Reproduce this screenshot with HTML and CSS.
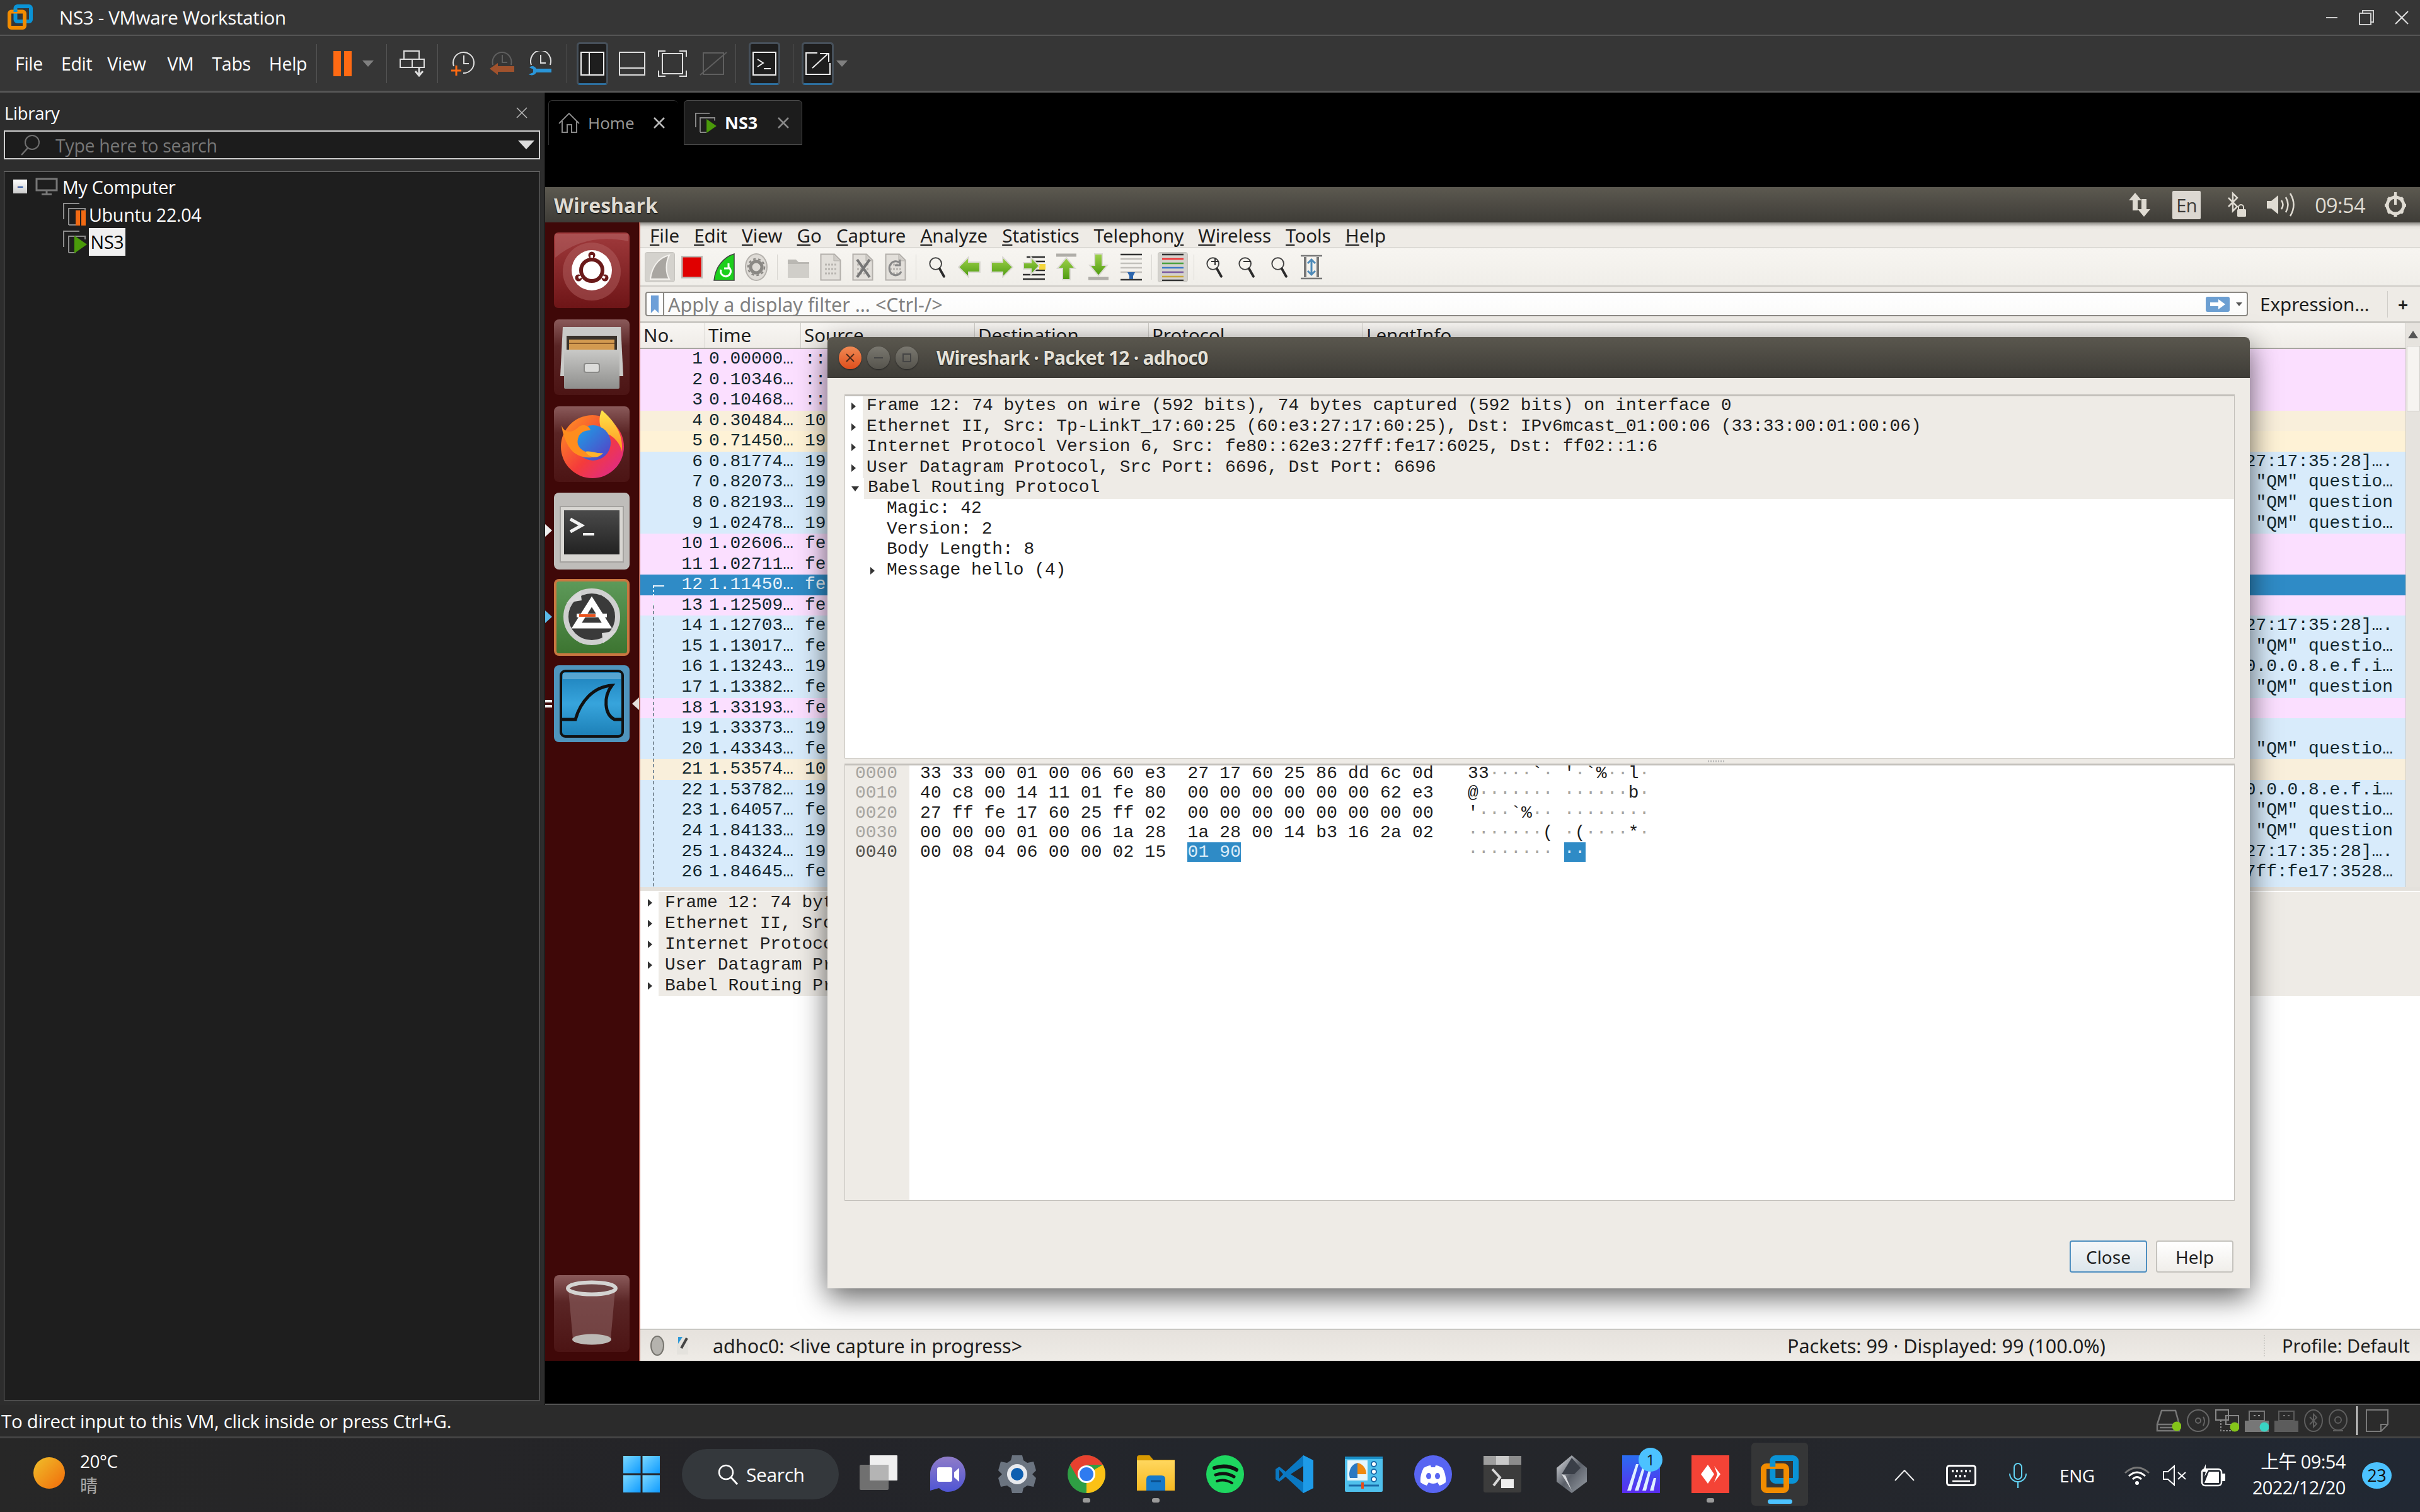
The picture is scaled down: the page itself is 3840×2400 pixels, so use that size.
FILE: index.html
```html
<!DOCTYPE html>
<html lang="en">
<head>
<meta charset="utf-8">
<title>NS3 - VMware Workstation</title>
<link rel="stylesheet" href="styles.css">
</head>
<body>
<svg class="defs" width="0" height="0">
  <defs>
    <linearGradient id="gRed" x1="0" y1="0" x2="0" y2="1"><stop offset="0" stop-color="#a03a3c"/><stop offset="1" stop-color="#6e1517"/></linearGradient>
    <linearGradient id="gMetal" x1="0" y1="0" x2="0" y2="1"><stop offset="0" stop-color="#c9c9c7"/><stop offset="1" stop-color="#8f8f8d"/></linearGradient>
    <linearGradient id="gTile" x1="0" y1="0" x2="0" y2="1"><stop offset="0" stop-color="#8a5a5a"/><stop offset=".35" stop-color="#5a2525"/><stop offset="1" stop-color="#4c1414"/></linearGradient>
    <linearGradient id="gTerm" x1="0" y1="0" x2="0" y2="1"><stop offset="0" stop-color="#4a4a4a"/><stop offset="1" stop-color="#222"/></linearGradient>
    <linearGradient id="gGreen" x1="0" y1="0" x2="0" y2="1"><stop offset="0" stop-color="#5e9a5a"/><stop offset="1" stop-color="#3c7430"/></linearGradient>
    <linearGradient id="gShark" x1="0" y1="0" x2="0" y2="1"><stop offset="0" stop-color="#1c80ba"/><stop offset=".5" stop-color="#37a4dc"/><stop offset="1" stop-color="#1c7fb6"/></linearGradient>
    <linearGradient id="gFox" x1="0" y1="0" x2="1" y2="1"><stop offset="0" stop-color="#ff9a1f"/><stop offset=".55" stop-color="#f43b3b"/><stop offset="1" stop-color="#d9269a"/></linearGradient>
    <linearGradient id="gFoxT" x1="0" y1="0" x2="0" y2="1"><stop offset="0" stop-color="#ffe84a"/><stop offset="1" stop-color="#ff8f1e"/></linearGradient>
    <linearGradient id="gFoxB" x1="0" y1="0" x2="1" y2="1"><stop offset="0" stop-color="#18a6e8"/><stop offset="1" stop-color="#5a3bc4"/></linearGradient>
    <linearGradient id="gWin" x1="0" y1="0" x2="1" y2="1"><stop offset="0" stop-color="#7ad8ff"/><stop offset="1" stop-color="#0f9bff"/></linearGradient>
    <linearGradient id="gMeet" x1="0" y1="0" x2="0" y2="1"><stop offset="0" stop-color="#8f7cc8"/><stop offset="1" stop-color="#4f55d4"/></linearGradient>
    <linearGradient id="gFolder" x1="0" y1="0" x2="0" y2="1"><stop offset="0" stop-color="#ffd75e"/><stop offset="1" stop-color="#f7b921"/></linearGradient>
    <linearGradient id="gLin" x1="0" y1="0" x2="0" y2="1"><stop offset="0" stop-color="#2a6df0"/><stop offset="1" stop-color="#5a2cf0"/></linearGradient>
    <linearGradient id="gCry" x1="0" y1="0" x2="1" y2="1"><stop offset="0" stop-color="#e4e6ea"/><stop offset=".5" stop-color="#5a5f68"/><stop offset="1" stop-color="#9aa0a8"/></linearGradient>
    <linearGradient id="gGreenA" x1="0" y1="0" x2="0" y2="1"><stop offset="0" stop-color="#9ed24a"/><stop offset="1" stop-color="#4d9a10"/></linearGradient>
    <symbol id="vmlogo" viewBox="0 0 40 40">
      <rect x="12.5" y="3" width="24.5" height="24" rx="3" fill="none" stroke="#0a93d6" stroke-width="6"/>
      <rect x="3" y="11.5" width="24" height="25.5" rx="3" fill="none" stroke="#f28c00" stroke-width="6"/>
      <path d="M12.5 12V8.5" fill="none" stroke="#0a93d6" stroke-width="6"/>
    </symbol>
    <symbol id="vmstack" viewBox="0 0 36 36">
      <path d="M1 26V1H26" fill="none" stroke="#8c8c8c" stroke-width="2"/>
      <path d="M9 35V9H35V14M9 35H20" fill="none" stroke="#8c8c8c" stroke-width="2"/>
    </symbol>
    <symbol id="dfile" viewBox="0 0 34 44">
      <path d="M1.500 1.500H23L32.500 11V42.500H1.500Z" fill="#e2dfda" stroke="#b3b0ab" stroke-width="2"/>
      <path d="M22 2V12H32" fill="#cfccc7" stroke="#b3b0ab"/>
      <path d="M8 18H26M8 25H26M8 32H26" stroke="#b9b6b1" stroke-width="3" stroke-dasharray="3 2"/>
    </symbol>
    <symbol id="lens" viewBox="0 0 36 44">
      <circle cx="15" cy="15" r="12" fill="#f5f3ee" stroke="#444" stroke-width="2.500"/>
      <path d="M23 25L32 41" stroke="#2b2b2b" stroke-width="5" stroke-linecap="round"/>
    </symbol>
  </defs>
</svg>

<div class="app">
  <header class="titlebar">
    <svg class="vmlogo" width="40" height="40"><use href="#vmlogo"/></svg>
    <span class="apptitle">NS3 - VMware Workstation</span>
    <div class="winctl">
      <svg width="20" height="4" viewBox="0 0 20 4"><path d="M1 2H19" stroke="#ccc" stroke-width="2"/></svg>
      <svg width="24" height="24" viewBox="0 0 24 24"><path d="M6 5V1H23V19H19" fill="none" stroke="#ccc" stroke-width="2"/><rect x="1" y="5" width="18" height="18" fill="none" stroke="#ccc" stroke-width="2"/></svg>
      <svg width="22" height="22" viewBox="0 0 22 22"><path d="M1 1L21 21M21 1L1 21" stroke="#ddd" stroke-width="2"/></svg>
    </div>
  </header>

  <nav class="toolbar">
    <span class="menu">File</span><span class="menu">Edit</span><span class="menu v">View</span><span class="menu">VM</span><span class="menu">Tabs</span><span class="menu last">Help</span>
    <i class="sep"></i>
    <svg class="ml6" width="29" height="40" viewBox="0 0 29 40"><rect width="12" height="40" fill="#ff6a13"/><rect x="17" width="12" height="40" fill="#ff6a13"/></svg>
    <svg class="ml-3" width="18" height="10" viewBox="0 0 18 10"><path d="M0 0H18L9 10Z" fill="#808080"/></svg>
    <i class="sep"></i>
    <svg width="40" height="42" viewBox="0 0 40 42"><g fill="none" stroke="#ddd" stroke-width="2"><rect x="7" y="1" width="24" height="13"/><rect x="1" y="14" width="19" height="13"/><rect x="20" y="14" width="19" height="13"/><path d="M31 27V40M25 33L31 40L37 33" stroke-width="3"/></g></svg>
    <i class="sep"></i>
    <svg width="42" height="40" viewBox="0 0 42 40"><g fill="none"><path d="M5 24A16.500 16.500 0 1 1 20 35" stroke="#ddd" stroke-width="2"/><path d="M21 7V20H29" stroke="#ddd" stroke-width="2"/><path d="M9 23V39M1 31H17" stroke="#ff6a13" stroke-width="3"/></g></svg>
    <svg width="40" height="40" viewBox="0 0 40 40"><g fill="none" stroke="#5f5f5f" stroke-width="2"><path d="M5 22A15 16 0 1 1 34 22"/><path d="M20 6V18H28"/></g><path d="M0 28L13 19V24H39V33H13V38Z" fill="#a0522d"/></svg>
    <svg width="42" height="40" viewBox="0 0 42 40"><g fill="none" stroke="#ddd" stroke-width="2"><path d="M6 22A16 17 0 1 1 36 22"/><path d="M21 6V19H29"/></g><path d="M3 26C8 22 12 25 14 28H38V34H14C12 38 7 40 2 37L9 34V29Z" fill="#2a96d9"/></svg>
    <i class="sep"></i>
    <span class="tbsel ml-5"><svg width="38" height="38" viewBox="0 0 38 38"><g fill="none" stroke="#eee" stroke-width="2"><rect x="1" y="1" width="36" height="36"/><path d="M14 1V37"/></g></svg></span>
    <svg class="ml-3" width="42" height="38" viewBox="0 0 42 38"><g fill="none" stroke="#ddd" stroke-width="2"><rect x="1" y="1" width="40" height="36"/><path d="M1 26H41"/></g></svg>
    <svg width="46" height="42" viewBox="0 0 46 42"><g fill="none" stroke="#ddd" stroke-width="2"><rect x="7" y="5" width="32" height="32"/><path d="M1 10V1H12M34 1H45V10M45 32V41H34M12 41H1V32"/></g></svg>
    <svg width="44" height="40" viewBox="0 0 44 40"><g fill="none" stroke="#5f5f5f" stroke-width="2"><rect x="6" y="3" width="32" height="34"/><path d="M1 38L43 2"/></g></svg>
    <i class="sep ml-7"></i>
    <span class="tbsel"><svg width="38" height="38" viewBox="0 0 38 38"><g fill="none" stroke="#eee" stroke-width="2"><rect x="1" y="1" width="36" height="36"/><path d="M8 12L17 18L8 24M18 27H29"/></g></svg></span>
    <i class="sep"></i>
    <span class="tbsel wide ml-7"><svg width="42" height="38" viewBox="0 0 42 38"><g fill="none" stroke="#eee" stroke-width="2"><path d="M20 2H2V36H40V18"/><path d="M12 26L36 4M24 3H38V16"/></g></svg></span>
    <svg class="ml-17" width="20" height="10" viewBox="0 0 18 10"><path d="M0 0H18L9 10Z" fill="#808080"/></svg>
  </nav>

  <div class="main">
    <aside class="library">
      <div class="libhead"><span>Library</span>
        <svg width="18" height="18" viewBox="0 0 18 18"><path d="M1 1L17 17M17 1L1 17" stroke="#bbb" stroke-width="1.500"/></svg>
      </div>
      <div class="libsearch">
        <svg width="32" height="34" viewBox="0 0 32 34"><circle cx="19" cy="13" r="11" fill="none" stroke="#707070" stroke-width="2"/><path d="M12 22L2 33" stroke="#707070" stroke-width="2.500"/></svg>
        <span class="ph">Type here to search</span>
        <svg class="drop" width="26" height="14" viewBox="0 0 26 14"><path d="M0 0H26L13 14Z" fill="#ddd"/></svg>
      </div>
      <div class="libtree">
        <div class="node">
          <span class="expander">–</span>
          <svg width="36" height="28" viewBox="0 0 36 28"><g fill="none" stroke="#777" stroke-width="3"><rect x="2" y="2" width="32" height="18"/><path d="M18 20V26M10 26.500H26"/></g></svg>
          <span>My Computer</span>
        </div>
        <div class="node sub">
          <span class="vmic"><svg width="36" height="36"><use href="#vmstack"/></svg><i class="pausebars"></i></span>
          <span>Ubuntu 22.04</span>
        </div>
        <div class="node sub">
          <span class="vmic"><svg width="36" height="36"><use href="#vmstack"/></svg><svg class="playmark" width="20" height="28" viewBox="0 0 20 28"><path d="M0 0L20 14L0 28Z" fill="#4a9a0a"/></svg></span>
          <span class="picked">NS3</span>
        </div>
      </div>
    </aside>

    <section class="vmarea">
      <div class="tabs">
        <div class="tab home">
          <svg width="34" height="32" viewBox="0 0 34 32"><path d="M1 17L17 1L33 17M6 13V31H14V19H21V31H29V13" fill="none" stroke="#888" stroke-width="2"/></svg>
          <span>Home</span>
          <svg class="tabx" width="18" height="18" viewBox="0 0 18 18"><path d="M1 1L17 17M17 1L1 17" stroke="#bbb" stroke-width="2.500"/></svg>
        </div>
        <div class="tab active">
          <span class="vmic small"><svg width="32" height="32"><use href="#vmstack"/></svg><svg class="playmark" width="16" height="22" viewBox="0 0 20 28"><path d="M0 0L20 14L0 28Z" fill="#4a9a0a"/></svg></span>
          <span class="tabname">NS3</span>
          <svg class="tabx" width="18" height="18" viewBox="0 0 18 18"><path d="M1 1L17 17M17 1L1 17" stroke="#888" stroke-width="2.500"/></svg>
        </div>
      </div>

      <div class="guest">
        <div class="gtop">
          <span class="gtitle">Wireshark</span>
          <div class="gtray">
            <svg width="38" height="38" viewBox="0 0 38 38"><path d="M12 0L22 12H16V28H8V12H2ZM26 38L36 26H30V10H22V26H16Z" fill="#dfdbd2"/></svg>
            <span class="en">En</span>
            <svg class="gbt" width="32" height="42" viewBox="0 0 32 42"><path d="M3 10L17 24L10 31V3L17 10L3 24" fill="none" stroke="#dfdbd2" stroke-width="2.500"/><path d="M19 29V25A4 4 0 0 1 27 25V29" fill="none" stroke="#dfdbd2" stroke-width="2"/><rect x="17" y="28" width="14" height="12" rx="1.500" fill="#dfdbd2"/></svg>
            <svg class="gvol" width="46" height="42" viewBox="0 0 46 42"><path d="M0 15H7L18 6V36L7 27H0Z" fill="#dfdbd2"/><g fill="none" stroke="#dfdbd2" stroke-width="2.500"><path d="M23 14Q28 21 23 28"/><path d="M30 9Q37 21 30 33"/><path d="M37 3Q48 21 37 39"/></g></svg>
            <span class="gclock">09:54</span>
            <svg width="38" height="40" viewBox="0 0 38 40"><g fill="none" stroke="#dfdbd2"><circle cx="19" cy="21" r="13" stroke-width="5"/><path d="M19 0V20" stroke-width="4"/><path d="M19 4V9M19 34V39M2 21H7M31 21H36M7 9L11 12M31 9L27 12M7 33L11 30M31 33L27 30" stroke-width="5"/></g></svg>
          </div>
        </div>
        <div class="gbody">
          <div class="launcher">
            <div class="tile">
              <svg width="120" height="120" viewBox="0 0 120 120"><rect width="120" height="120" rx="7" fill="url(#gRed)"/><path d="M2 40Q50 0 118 14V2H2Z" fill="#c07a7a" opacity=".35"/><ellipse cx="60" cy="62" rx="46" ry="46" fill="#b56666" opacity=".45"/><circle cx="60" cy="60" r="32" fill="#fff"/><circle cx="60" cy="60" r="17" fill="none" stroke="#6a1a1a" stroke-width="6"/><circle cx="60" cy="36" r="5.500" fill="#6a1a1a"/><circle cx="39" cy="72" r="5.500" fill="#6a1a1a"/><circle cx="81" cy="72" r="5.500" fill="#6a1a1a"/><path d="M60 40V36M43 70L39 72M77 70L81 72" stroke="#fff" stroke-width="4"/></svg>
            </div>
            <div class="tile">
              <svg width="120" height="120" viewBox="0 0 120 120"><rect width="120" height="120" rx="8" fill="url(#gTile)"/><path d="M14 12H106L110 90H10Z" fill="#c9c9c7"/><rect x="20" y="26" width="80" height="32" fill="#3a332c"/><rect x="24" y="32" width="72" height="18" fill="#d39a50"/><path d="M24 38H96" stroke="#8a5a2a" stroke-width="2"/><rect x="16" y="48" width="88" height="62" rx="2" fill="url(#gMetal)"/><rect x="48" y="70" width="24" height="14" rx="3" fill="#dcdcda" stroke="#8a8a88" stroke-width="2"/></svg>
            </div>
            <div class="tile">
              <svg width="120" height="120" viewBox="0 0 120 120"><rect width="120" height="120" rx="8" fill="url(#gTile)"/><circle cx="61" cy="64" r="50" fill="url(#gFox)"/><path d="M76 6C96 24 110 42 108 72C104 56 92 44 78 42C72 32 70 18 76 6Z" fill="url(#gFoxT)"/><circle cx="62" cy="58" r="28" fill="url(#gFoxB)"/><path d="M12 30C18 46 32 40 40 32C46 28 56 30 58 38C48 38 40 42 38 52C34 68 54 78 74 74C66 84 44 84 30 72C20 62 14 46 12 30Z" fill="#ff8d1e"/><path d="M50 72C60 70 70 76 78 74C70 84 56 82 50 72Z" fill="#ffb32e"/></svg>
            </div>
            <div class="tile tall">
              <svg width="120" height="122" viewBox="0 0 120 122"><rect width="120" height="122" rx="8" fill="#bfbdba"/><rect x="10" y="22" width="100" height="88" fill="#d8d6d2" stroke="#a5a3a0" stroke-width="2"/><rect x="16" y="28" width="88" height="70" fill="url(#gTerm)"/><path d="M26 42L44 52L26 62" fill="none" stroke="#f2f2f2" stroke-width="5"/><path d="M46 66H64" stroke="#f2f2f2" stroke-width="4"/></svg>
              <i class="pip white"></i>
            </div>
            <div class="tile tall">
              <svg width="120" height="122" viewBox="0 0 120 122"><rect x="2" y="2" width="116" height="118" rx="6" fill="url(#gGreen)" stroke="#c97740" stroke-width="4"/><circle cx="60" cy="60" r="41" fill="#3a3a3a" stroke="#cfcfcf" stroke-width="8"/><path d="M20 38L42 18L44 34Z" fill="#d8d8d8"/><path d="M100 82L78 102L76 86Z" fill="#d8d8d8"/><path d="M60 36L84 74H36Z" fill="none" stroke="#fff" stroke-width="9"/><path d="M36 58H84" stroke="#fff" stroke-width="6"/><path d="M40 58H66" stroke="#e8511b" stroke-width="4"/></svg>
              <i class="pip blue"></i>
            </div>
            <div class="tile tall">
              <svg width="120" height="122" viewBox="0 0 120 122"><rect width="120" height="122" rx="8" fill="#4f94bd"/><rect x="11" y="9" width="98" height="104" rx="7" fill="url(#gShark)" stroke="#111" stroke-width="4"/><path d="M12 86H34C42 58 62 34 92 32C78 50 80 78 96 86H108" fill="none" stroke="#111" stroke-width="5"/><path d="M14 12H106V22H14Z" fill="#7dbbdc" opacity=".6"/></svg>
              <i class="pip double"></i><i class="pip right"></i>
            </div>
            <div class="tile trash">
              <svg width="120" height="122" viewBox="0 0 120 122"><rect width="120" height="122" rx="8" fill="url(#gTile)"/><path d="M23 24L30 102H90L97 24Z" fill="#8a5f5f" opacity=".6"/><ellipse cx="60" cy="102" rx="31" ry="8.500" fill="#bdbab6"/><ellipse cx="60" cy="21" rx="38" ry="9.500" fill="#6d4444" stroke="#d4d4d2" stroke-width="6"/></svg>
            </div>
          </div>

          <div class="shark">
            <div class="wsmenu">
              <span><u>F</u>ile</span><span><u>E</u>dit</span><span><u>V</u>iew</span><span><u>G</u>o</span><span><u>C</u>apture</span><span><u>A</u>nalyze</span><span><u>S</u>tatistics</span><span>Telephon<u>y</u></span><span><u>W</u>ireless</span><span><u>T</u>ools</span><span><u>H</u>elp</span>
            </div>
            <div class="wstools">
              <span class="wt sel"><svg width="34" height="42" viewBox="0 0 34 42"><path d="M2 40C4 22 14 6 32 2C26 14 26 30 32 40Z" fill="#a9a6a1" stroke="#f4f2ee" stroke-width="2"/></svg></span>
              <span class="wt"><svg width="34" height="36" viewBox="0 0 34 36"><rect x="1" y="1" width="32" height="34" fill="#e00000" stroke="#bdbab5" stroke-width="3"/></svg></span>
              <span class="wt"><svg width="34" height="44" viewBox="0 0 34 44"><path d="M1 43C3 22 16 6 33 1V43Z" fill="#1ccf1c" stroke="#444" stroke-width="1.500"/><path d="M24 22A8 8 0 1 1 12 26M24 16V24H17" fill="none" stroke="#fff" stroke-width="3"/></svg></span>
              <span class="wt"><svg width="36" height="44" viewBox="0 0 36 44"><ellipse cx="18" cy="22" rx="17" ry="21" fill="#dedbd6" stroke="#b5b2ad" stroke-width="2"/><circle cx="18" cy="22" r="9" fill="none" stroke="#8a8884" stroke-width="5"/><circle cx="18" cy="22" r="13" fill="none" stroke="#8a8884" stroke-width="2.500" stroke-dasharray="4 4"/></svg></span>
              <i class="wsep"></i>
              <span class="wt"><svg width="36" height="36" viewBox="0 0 36 36"><path d="M1 6H14L18 10H35V35H1Z" fill="#bab8b3"/><rect x="1" y="13" width="34" height="22" fill="#d0cec9"/></svg></span>
              <span class="wt"><svg width="34" height="44"><use href="#dfile"/></svg></span>
              <span class="wt"><svg width="34" height="44"><use href="#dfile"/></svg><svg class="ovl" width="30" height="34" viewBox="0 0 30 34"><path d="M5 3L25 31M25 3L5 31" stroke="#777" stroke-width="4"/></svg></span>
              <span class="wt"><svg width="34" height="44"><use href="#dfile"/></svg><svg class="ovl" width="30" height="34" viewBox="0 0 30 34"><path d="M23 10A10 11 0 1 0 24 22M22 3V12H14" fill="none" stroke="#888" stroke-width="3"/></svg></span>
              <i class="wsep"></i>
              <span class="wt"><svg width="28" height="44"><use href="#lens"/></svg></span>
              <span class="wt"><svg width="36" height="34" viewBox="0 0 36 34"><path d="M1 17L17 1V9H35V25H17V33Z" fill="url(#gGreenA)" stroke="#dcdad5" stroke-width="2"/></svg></span>
              <span class="wt"><svg width="36" height="34" viewBox="0 0 36 34"><path d="M35 17L19 1V9H1V25H19V33Z" fill="url(#gGreenA)" stroke="#dcdad5" stroke-width="2"/></svg></span>
              <span class="wt"><svg width="36" height="44" viewBox="0 0 36 44"><path d="M6 6H35M20 13H35M20 20H35M20 27H35M0 34H35M0 41H35" stroke="#2e2e2e" stroke-width="2.500"/><rect x="26" y="17" width="10" height="9" fill="#f5d63c"/><path d="M1 15H13V6L26 20L13 34V25H1Z" fill="url(#gGreenA)" stroke="#dcdad5" stroke-width="2"/></svg></span>
              <span class="wt"><svg width="36" height="44" viewBox="0 0 36 44"><path d="M2 3H34" stroke="#b0aea9" stroke-width="5"/><path d="M18 7L32 24H24V42H12V24H4Z" fill="url(#gGreenA)" stroke="#dcdad5" stroke-width="2"/></svg></span>
              <span class="wt"><svg width="36" height="44" viewBox="0 0 36 44"><path d="M2 40H34" stroke="#b0aea9" stroke-width="5"/><path d="M18 36L32 19H24V1H12V19H4Z" fill="url(#gGreenA)" stroke="#dcdad5" stroke-width="2"/></svg></span>
              <span class="wt"><svg width="36" height="44" viewBox="0 0 36 44"><path d="M1 2H35M1 42H35" stroke="#333" stroke-width="2.500"/><path d="M1 9H35M1 16H35M1 23H35M1 30H35" stroke="#c2c0bb" stroke-width="2.500"/><path d="M12 30H24L21 36V41H15V36Z" fill="#2d66ad"/></svg></span>
              <i class="wsep"></i>
              <span class="wt sel"><svg width="36" height="44" viewBox="0 0 36 44"><g stroke-width="2.500"><path d="M1 2H35" stroke="#333"/><path d="M1 9H35" stroke="#e33"/><path d="M1 16H35" stroke="#4aa040"/><path d="M1 23H35" stroke="#3a78c8"/><path d="M1 30H35" stroke="#7a5aa0"/><path d="M1 37H35" stroke="#c8a83a"/><path d="M1 43H35" stroke="#333"/></g></svg></span>
              <i class="wsep"></i>
              <span class="wt"><svg width="28" height="44"><use href="#lens"/></svg><svg class="ovl lensmark" width="14" height="14" viewBox="0 0 14 14"><path d="M1 7H13M7 1V13" stroke="#333" stroke-width="2"/></svg></span>
              <span class="wt"><svg width="28" height="44"><use href="#lens"/></svg><svg class="ovl lensmark" width="14" height="14" viewBox="0 0 14 14"><path d="M1 7H13" stroke="#333" stroke-width="2"/></svg></span>
              <span class="wt"><svg width="28" height="44"><use href="#lens"/></svg></span>
              <span class="wt"><svg width="36" height="40" viewBox="0 0 36 40"><path d="M1 2H35M1 38H35" stroke="#777" stroke-width="2.500"/><path d="M8 4V36M28 4V36" stroke="#777" stroke-width="4"/><path d="M18 8V32M12 14L18 8L24 14M12 26L18 32L24 26" fill="none" stroke="#4e8ab8" stroke-width="3"/></svg></span>
            </div>
            <div class="wsfilter">
              <div class="finput">
                <span class="bookmark"><svg width="14" height="32" viewBox="0 0 14 32"><path d="M0 0H14V32L7 25L0 32Z" fill="#6d9fd8"/></svg></span>
                <span class="fph">Apply a display filter … &lt;Ctrl-/&gt;</span>
                <svg class="fgo" width="38" height="24" viewBox="0 0 38 24"><rect width="38" height="24" rx="3" fill="#6c9fd2"/><path d="M7 9H20V4L31 12L20 20V15H7Z" fill="#fff"/></svg>
                <svg class="fdd" width="10" height="6" viewBox="0 0 10 6"><path d="M0 0H10L5 6Z" fill="#555"/></svg>
              </div>
              <span class="fexpr">Expression…</span>
              <i class="fsep"></i>
              <span class="fplus">+</span>
            </div>

            <div class="plist">
              <div class="plmain">
                <div class="plhead"><span class="h no">No.</span><span class="h tm">Time</span><span class="h sr">Source</span><span class="h ds">Destination</span><span class="h pr">Protocol</span><span class="h ln">LengtInfo</span></div>
                <div class="plbody">
                  <div class="row pk"><span class="no">1</span><span class="tm">0.00000…</span><span class="sr">::</span></div>
                  <div class="row pk"><span class="no">2</span><span class="tm">0.10346…</span><span class="sr">::</span></div>
                  <div class="row pk"><span class="no">3</span><span class="tm">0.10468…</span><span class="sr">::</span></div>
                  <div class="row bg"><span class="no">4</span><span class="tm">0.30484…</span><span class="sr">10</span></div>
                  <div class="row yl"><span class="no">5</span><span class="tm">0.71450…</span><span class="sr">19</span></div>
                  <div class="row bl"><span class="no">6</span><span class="tm">0.81774…</span><span class="sr">19</span><span class="info">27:17:35:28]….</span></div>
                  <div class="row bl"><span class="no">7</span><span class="tm">0.82073…</span><span class="sr">19</span><span class="info">"QM" questio…</span></div>
                  <div class="row bl"><span class="no">8</span><span class="tm">0.82193…</span><span class="sr">19</span><span class="info">"QM" question</span></div>
                  <div class="row bl"><span class="no">9</span><span class="tm">1.02478…</span><span class="sr">19</span><span class="info">"QM" questio…</span></div>
                  <div class="row pk"><span class="no">10</span><span class="tm">1.02606…</span><span class="sr">fe</span></div>
                  <div class="row pk"><span class="no">11</span><span class="tm">1.02711…</span><span class="sr">fe</span></div>
                  <div class="row picked-row"><span class="no">12</span><span class="tm">1.11450…</span><span class="sr">fe</span></div>
                  <div class="row pk"><span class="no">13</span><span class="tm">1.12509…</span><span class="sr">fe</span></div>
                  <div class="row bl"><span class="no">14</span><span class="tm">1.12703…</span><span class="sr">fe</span><span class="info">27:17:35:28]….</span></div>
                  <div class="row bl"><span class="no">15</span><span class="tm">1.13017…</span><span class="sr">fe</span><span class="info">"QM" questio…</span></div>
                  <div class="row bl"><span class="no">16</span><span class="tm">1.13243…</span><span class="sr">19</span><span class="info">0.0.0.8.e.f.i…</span></div>
                  <div class="row bl"><span class="no">17</span><span class="tm">1.13382…</span><span class="sr">fe</span><span class="info">"QM" question</span></div>
                  <div class="row pk"><span class="no">18</span><span class="tm">1.33193…</span><span class="sr">fe</span></div>
                  <div class="row bl"><span class="no">19</span><span class="tm">1.33373…</span><span class="sr">19</span></div>
                  <div class="row bl"><span class="no">20</span><span class="tm">1.43343…</span><span class="sr">fe</span><span class="info">"QM" questio…</span></div>
                  <div class="row bg"><span class="no">21</span><span class="tm">1.53574…</span><span class="sr">10</span></div>
                  <div class="row bl"><span class="no">22</span><span class="tm">1.53782…</span><span class="sr">19</span><span class="info">0.0.0.8.e.f.i…</span></div>
                  <div class="row bl"><span class="no">23</span><span class="tm">1.64057…</span><span class="sr">fe</span><span class="info">"QM" questio…</span></div>
                  <div class="row bl"><span class="no">24</span><span class="tm">1.84133…</span><span class="sr">19</span><span class="info">"QM" question</span></div>
                  <div class="row bl"><span class="no">25</span><span class="tm">1.84324…</span><span class="sr">19</span><span class="info">27:17:35:28]….</span></div>
                  <div class="row bl"><span class="no">26</span><span class="tm">1.84645…</span><span class="sr">fe</span><span class="info">7ff:fe17:3528…</span></div>
                  <div class="row bl"></div>
                  <svg class="bracket" width="20" height="480" viewBox="0 0 20 480"><path d="M1 1H18" stroke="#e8f2fa" stroke-width="2"/><path d="M1 0V32" stroke="#e8f2fa" stroke-width="2" stroke-dasharray="4 3"/><path d="M1 32V480" stroke="#7f8f9c" stroke-width="2" stroke-dasharray="5 4"/></svg>
                </div>
              </div>
              <div class="plscroll"><svg width="16" height="12" viewBox="0 0 16 12"><path d="M8 0L16 12H0Z" fill="#555"/></svg><i class="thumb"></i></div>
            </div>

            <div class="pdetail">
              <div class="dline"><i class="tri"></i><span>Frame 12: 74 bytes on wire (592 bits), 74 bytes captured (592 bits) on interface 0</span></div>
              <div class="dline"><i class="tri"></i><span>Ethernet II, Src: Tp-LinkT_17:60:25 (60:e3:27:17:60:25), Dst: IPv6mcast_01:00:06 (33:33:00:01:00:06)</span></div>
              <div class="dline"><i class="tri"></i><span>Internet Protocol Version 6, Src: fe80::62e3:27ff:fe17:6025, Dst: ff02::1:6</span></div>
              <div class="dline"><i class="tri"></i><span>User Datagram Protocol, Src Port: 6696, Dst Port: 6696</span></div>
              <div class="dline"><i class="tri"></i><span>Babel Routing Protocol</span></div>
            </div>

            <div class="wsstatus">
              <svg class="led" width="22" height="32" viewBox="0 0 22 32"><ellipse cx="11" cy="16" rx="10" ry="15" fill="#b5b3ae" stroke="#77756f" stroke-width="2"/></svg>
              <svg width="22" height="32" viewBox="0 0 22 32"><rect x="2" y="2" width="18" height="28" fill="#e4e2dd"/><path d="M4 2H11L4 13Z" fill="#2f9ad8"/><path d="M18 4L9 20" stroke="#444" stroke-width="4"/></svg>
              <span class="capture">adhoc0: &lt;live capture in progress&gt;</span>
              <span class="stats">Packets: 99 · Displayed: 99 (100.0%)</span>
              <i class="statsep"></i>
              <span class="profile">Profile: Default</span>
            </div>
          </div>
        </div>

        <div class="dialog">
          <div class="dtitle">
            <span class="wbtn closeb"><svg width="14" height="14" viewBox="0 0 14 14"><path d="M1 1L13 13M13 1L1 13" stroke="#4a2a1a" stroke-width="2"/></svg></span>
            <span class="wbtn"><svg width="14" height="4" viewBox="0 0 14 4"><path d="M0 2H14" stroke="#444" stroke-width="2"/></svg></span>
            <span class="wbtn"><svg width="14" height="14" viewBox="0 0 14 14"><rect x="1" y="1" width="12" height="12" fill="none" stroke="#444" stroke-width="2"/></svg></span>
            <span class="dtext">Wireshark · Packet 12 · adhoc0</span>
          </div>
          <div class="dbody">
            <div class="ptree">
              <div class="tline hi"><i class="tri"></i><span>Frame 12: 74 bytes on wire (592 bits), 74 bytes captured (592 bits) on interface 0</span></div>
              <div class="tline hi"><i class="tri"></i><span>Ethernet II, Src: Tp-LinkT_17:60:25 (60:e3:27:17:60:25), Dst: IPv6mcast_01:00:06 (33:33:00:01:00:06)</span></div>
              <div class="tline hi"><i class="tri"></i><span>Internet Protocol Version 6, Src: fe80::62e3:27ff:fe17:6025, Dst: ff02::1:6</span></div>
              <div class="tline hi"><i class="tri"></i><span>User Datagram Protocol, Src Port: 6696, Dst Port: 6696</span></div>
              <div class="tline hi"><i class="tri open"></i><span>Babel Routing Protocol</span></div>
              <div class="tline child"><span>Magic: 42</span></div>
              <div class="tline child"><span>Version: 2</span></div>
              <div class="tline child"><span>Body Length: 8</span></div>
              <div class="tline child sub"><i class="tri"></i><span>Message hello (4)</span></div>
            </div>
            <div class="splitter"><i></i></div>
            <div class="hexpane">
              <div class="gut"><div>0000</div><div>0010</div><div>0020</div><div>0030</div><div class="on">0040</div></div>
              <div class="hexcol"><div>33 33 00 01 00 06 60 e3  27 17 60 25 86 dd 6c 0d</div><div>40 c8 00 14 11 01 fe 80  00 00 00 00 00 00 62 e3</div><div>27 ff fe 17 60 25 ff 02  00 00 00 00 00 00 00 00</div><div>00 00 00 01 00 06 1a 28  1a 28 00 14 b3 16 2a 02</div><div>00 08 04 06 00 00 02 15  <b>01 90</b></div></div>
              <div class="asccol">
                <div>33<s>····</s>`<s>·</s> '<s>·</s>`%<s>··</s>l<s>·</s></div>
                <div>@<s>·······</s> <s>······</s>b<s>·</s></div>
                <div>'<s>···</s>`%<s>··</s> <s>········</s></div>
                <div><s>·······</s>( <s>·</s>(<s>····</s>*<s>·</s></div>
                <div><s>········</s> <b>··</b></div>
              </div>
            </div>
            <div class="dfoot"><button class="dbtn def">Close</button><button class="dbtn">Help</button></div>
          </div>
        </div>
      </div>
      <div class="vmgap"></div>
    </section>
  </div>

  <footer class="vmstatus">
    <span>To direct input to this VM, click inside or press Ctrl+G.</span>
    <div class="devs">
      <span class="dev"><svg width="40" height="36" viewBox="0 0 40 36"><path d="M9 2H31L37 24V34H2V24ZM2 24H37M6 29H26" fill="none" stroke="#777" stroke-width="2.500"/><circle cx="33" cy="27" r="7.500" fill="#84c51a"/></svg></span>
      <span class="dev"><svg width="36" height="36" viewBox="0 0 36 36"><g fill="none" stroke="#666" stroke-width="2"><ellipse cx="18" cy="18" rx="17" ry="17"/><circle cx="18" cy="18" r="4"/><path d="M26 12Q30 18 26 26"/></g></svg></span>
      <span class="dev"><svg width="38" height="36" viewBox="0 0 38 36"><g fill="none" stroke="#888" stroke-width="2"><rect x="1" y="1" width="20" height="16"/><rect x="17" y="10" width="20" height="14"/><path d="M9 17V34H30M26 24V30" stroke-dasharray="3 2"/></g><circle cx="31" cy="28" r="7.500" fill="#84c51a"/></svg></span>
      <span class="dev"><svg width="38" height="36" viewBox="0 0 38 36"><path d="M6 2H32V18H38V36H0V18H6Z" fill="#777"/><rect x="8" y="4" width="22" height="13" fill="#2b2b2b"/><path d="M14 10H17M21 10H24" stroke="#999" stroke-width="2"/><circle cx="31" cy="28" r="7.500" fill="#39d3c3"/></svg></span>
      <span class="dev"><svg width="38" height="36" viewBox="0 0 38 36"><path d="M6 2H32V18H38V36H0V18H6Z" fill="#5c5c5c"/><rect x="8" y="4" width="22" height="13" fill="#2b2b2b"/><path d="M14 10H17M21 10H24" stroke="#777" stroke-width="2"/></svg></span>
      <span class="dev"><svg width="30" height="36" viewBox="0 0 30 36"><ellipse cx="15" cy="18" rx="14" ry="17" fill="none" stroke="#5f5f5f" stroke-width="2"/><path d="M9 12L20 23L15 28V8L20 13L9 24" fill="none" stroke="#5f5f5f" stroke-width="2"/></svg></span>
      <span class="dev"><svg width="30" height="36" viewBox="0 0 30 36"><ellipse cx="15" cy="17" rx="14" ry="16" fill="none" stroke="#5f5f5f" stroke-width="2"/><circle cx="15" cy="17" r="5" fill="none" stroke="#5f5f5f" stroke-width="2"/><path d="M7 34H23" stroke="#5f5f5f" stroke-width="2"/></svg></span>
      <i class="devsep"></i>
      <span class="dev"><svg width="36" height="36" viewBox="0 0 36 36"><path d="M1 1H35V24L24 35H1ZM35 24H24V35" fill="none" stroke="#7a7a7a" stroke-width="2"/></svg></span>
    </div>
  </footer>

  <div class="taskbar">
    <div class="weather">
      <i class="sun"></i>
      <div class="wx"><span class="wt1">20°C</span><span class="wt2">晴</span></div>
    </div>
    <div class="tasks">
      <svg width="58" height="58" viewBox="0 0 58 58"><path d="M0 0H27.500V27.500H0Z" fill="url(#gWin)"/><path d="M30.500 0H58V27.500H30.500Z" fill="url(#gWin)"/><path d="M0 30.500H27.500V58H0Z" fill="url(#gWin)"/><path d="M30.500 30.500H58V58H30.500Z" fill="url(#gWin)"/></svg>
      <div class="search">
        <svg width="34" height="34" viewBox="0 0 34 34"><circle cx="14" cy="14" r="11" fill="none" stroke="#fff" stroke-width="2.500"/><path d="M22 22L32 33" stroke="#fff" stroke-width="3"/></svg>
        <span>Search</span>
      </div>
      <div class="tbicons">
        <span class="ti"><svg width="60" height="60" viewBox="0 0 60 60"><rect x="0" y="15" width="46" height="40" rx="2" fill="#707070"/><rect x="16" y="0" width="44" height="40" rx="1" fill="#f0f0f0"/><rect x="16" y="15" width="30" height="25" fill="#b4b4b4"/></svg></span>
        <span class="ti"><svg width="60" height="60" viewBox="0 0 60 60"><path d="M30 2C14 2 2 14 2 30V56L16 52C20 56 26 58 30 58C46 58 58 46 58 30C58 14 46 2 30 2Z" fill="url(#gMeet)"/><rect x="13" y="19" width="24" height="23" rx="3" fill="#fff"/><path d="M40 27L48 20V42L40 35Z" fill="#fff"/></svg></span>
        <span class="ti"><svg width="60" height="60" viewBox="0 0 60 60"><path d="M22 0H38L40 8L46 12L56 10L60 24L54 30L60 36L56 50L46 48L40 52L38 60H22L20 52L14 48L4 50L0 36L6 30L0 24L4 10L14 12L20 8Z" fill="#6b7480"/><ellipse cx="30" cy="30" rx="16" ry="16" fill="#e8eaee"/><ellipse cx="30" cy="30" rx="10" ry="10" fill="#0e5fb0"/></svg></span>
        <span class="ti dot"><svg width="60" height="60" viewBox="0 0 60 60"><circle cx="30" cy="30" r="30" fill="#2f9e44"/><path d="M30 30L56 15A30 30 0 0 1 30 60Z" fill="#fbc116"/><path d="M4 15A30 30 0 0 1 56 15H30L17 38Z" fill="#e8412f"/><circle cx="30" cy="30" r="14" fill="#fff"/><circle cx="30" cy="30" r="11" fill="#2f7bf0"/></svg></span>
        <span class="ti dot"><svg width="60" height="60" viewBox="0 0 60 60"><path d="M0 4Q0 0 4 0H20L26 7H60V56H0Z" fill="#d89a00"/><rect y="8" width="60" height="48" fill="url(#gFolder)"/><path d="M15 56V38Q15 32 21 32H39Q45 32 45 38V56Z" fill="#1679c9"/><path d="M22 41H38" stroke="#0b4f8c" stroke-width="3"/></svg></span>
        <span class="ti"><svg width="60" height="60" viewBox="0 0 60 60"><circle cx="30" cy="30" r="30" fill="#1ed760"/><g fill="none" stroke="#111" stroke-linecap="round"><path d="M13 20Q32 14 48 23" stroke-width="6"/><path d="M15 31Q30 26 44 34" stroke-width="5"/><path d="M17 41Q29 37 41 44" stroke-width="4"/></g></svg></span>
        <span class="ti"><svg width="60" height="60" viewBox="0 0 60 60"><path d="M44 0L60 8V52L44 60L16 34L6 42L0 38V22L6 18L16 26Z" fill="#0a78c2"/><path d="M44 0L60 8V52L44 60Z" fill="#1e9be8"/><path d="M44 17L24 30L44 43Z" fill="#23262c"/><path d="M6 23L12 30L6 37Z" fill="#23262c"/></svg></span>
        <span class="ti"><svg width="60" height="60" viewBox="0 0 60 60"><rect y="2" width="60" height="56" rx="2" fill="#4fc0ec"/><rect y="2" width="60" height="4" fill="#1a8fc8"/><path d="M4 8H36V40H4Z" fill="#e6f6fc"/><path d="M20 12V30H34A16 18 0 0 0 20 12Z" fill="#f08a10"/><path d="M20 12A16 18 0 0 0 8 36H20Z" fill="#2b79c2"/><path d="M6 48H54" stroke="#1a6aa8" stroke-width="3"/><rect x="26" y="43" width="4" height="10" fill="#e84b1a"/><circle cx="46" cy="14" r="4" fill="#fff" stroke="#1a6aa8" stroke-width="2"/><circle cx="46" cy="26" r="4" fill="#fff" stroke="#1a6aa8" stroke-width="2"/><circle cx="46" cy="38" r="4" fill="#fff" stroke="#1a6aa8" stroke-width="2"/></svg></span>
        <span class="ti"><svg width="60" height="60" viewBox="0 0 60 60"><circle cx="30" cy="30" r="30" fill="#5865f2"/><path d="M15 20Q22 16 26 16L27 19H33L34 16Q38 16 45 20Q51 31 50 43Q45 47 40 48L37 43Q34 45 30 45Q26 45 23 43L20 48Q15 47 10 43Q9 31 15 20Z" fill="#fff"/><ellipse cx="23" cy="33" rx="4" ry="5" fill="#5865f2"/><ellipse cx="37" cy="33" rx="4" ry="5" fill="#5865f2"/></svg></span>
        <span class="ti"><svg width="60" height="60" viewBox="0 0 60 60"><rect y="1" width="60" height="58" rx="3" fill="#3c3c3c"/><rect y="1" width="20" height="14" fill="#9e9e9e"/><rect x="20" y="1" width="20" height="14" fill="#c9c9c9"/><rect x="40" y="1" width="20" height="14" fill="#8c8c8c"/><path d="M14 22L26 35L16 48" fill="none" stroke="#d8d8d8" stroke-width="4"/><rect x="28" y="38" width="20" height="14" fill="#eee"/></svg></span>
        <span class="ti"><svg width="60" height="60" viewBox="0 0 60 60"><path d="M30 0L54 20V42L30 60L6 42V20Z" fill="url(#gCry)"/><path d="M30 4L14 30H34L44 20Z" fill="#3a3f48"/><path d="M14 30L30 56L20 32Z" fill="#d8dade"/></svg></span>
        <span class="ti"><svg width="60" height="60" viewBox="0 0 60 60"><rect width="60" height="60" fill="url(#gLin)"/><path d="M8 56L22 14H26L14 56ZM20 56L32 20H36L26 56ZM32 56L42 24H46L38 56ZM44 56L50 36H54L50 56Z" fill="#dff0ff"/></svg><b class="badge">1</b></span>
        <span class="ti dot"><svg width="60" height="60" viewBox="0 0 60 60"><rect width="60" height="60" fill="#f44336"/><path d="M26 15L36 30L26 45L15 30Z" fill="#fff"/><path d="M36 17L46 30L36 43L41 30Z" fill="#fff"/></svg></span>
        <span class="ti current"><svg width="60" height="60"><use href="#vmlogo"/></svg></span>
      </div>
    </div>
    <div class="tray">
      <svg width="32" height="18" viewBox="0 0 32 18"><path d="M1 17L16 1L31 17" fill="none" stroke="#eee" stroke-width="2"/></svg>
      <svg class="trk" width="48" height="34" viewBox="0 0 48 34"><rect x="1.500" y="1.500" width="45" height="31" rx="4" fill="none" stroke="#fff" stroke-width="3"/><path d="M9 10H39M14 18H34" stroke="#fff" stroke-width="4" stroke-dasharray="3 4"/><path d="M10 26H38" stroke="#fff" stroke-width="2.500"/></svg>
      <svg class="trm" width="28" height="40" viewBox="0 0 28 40"><rect x="8" y="1" width="12" height="25" rx="6" fill="none" stroke="#63d4f5" stroke-width="2"/><path d="M1 17A13 13 0 0 0 27 17M14 30V40" fill="none" stroke="#63d4f5" stroke-width="2"/></svg>
      <span class="eng">ENG</span>
      <svg class="trw" width="42" height="30" viewBox="0 0 42 30"><g fill="none" stroke-width="3"><path d="M2 11Q21 -6 40 11" stroke="#777"/><path d="M8 16Q21 4 34 16" stroke="#fff"/><path d="M14 21Q21 14 28 21" stroke="#fff"/></g><circle cx="21" cy="27" r="3" fill="#fff"/></svg>
      <svg class="trv" width="38" height="34" viewBox="0 0 38 34"><path d="M1 11H8L18 2V32L8 23H1Z" fill="none" stroke="#fff" stroke-width="2"/><path d="M24 12L36 23M36 12L24 23" stroke="#fff" stroke-width="2"/></svg>
      <svg class="trb" width="40" height="36" viewBox="0 0 40 36"><rect x="2" y="8" width="31" height="26" rx="5" fill="none" stroke="#fff" stroke-width="2.500"/><path d="M6 30L13 12H29V30Z" fill="#fff"/><rect x="34" y="15" width="5" height="12" fill="#fff"/><path d="M8 0L3 12H8L6 20L13 8H8Z" fill="#fff"/></svg>
      <div class="clock"><span>上午 09:54</span><span>2022/12/20</span></div>
      <span class="notif">23</span>
    </div>
  </div>
</div>
</body>
</html>
```
FILE: styles.css
```css
* { box-sizing: border-box; }
html, body { margin: 0; padding: 0; background: #000; }
body { width: 3840px; height: 2400px; overflow: hidden; font-family: "Open Sans", "Noto Sans CJK SC", sans-serif; }
i { display: block; font-style: normal; }
svg { display: block; flex: none; }
.defs { position: absolute; }
.app { width: 3840px; height: 2400px; display: flex; flex-direction: column; }

/* VMware chrome */
.titlebar { height: 57px; flex: none; background: #363636; border-bottom: 2px solid #555; display: flex; align-items: center; padding-left: 12px; color: #fff; }
.vmlogo { margin-top: -2px; }
.apptitle { margin-left: 42px; font-size: 29.5px; letter-spacing: -.3px; }
.winctl { margin-left: auto; display: flex; align-items: center; gap: 33px; padding-right: 18px; }

.toolbar { height: 90px; flex: none; background: #363636; border-bottom: 3px solid #555; display: flex; align-items: center; gap: 20px; padding-left: 24px; color: #fff; }
.menu { font-size: 28.5px; margin-right: 9px; letter-spacing: -.3px; }
.menu.v { margin-left: -5px; margin-right: 14px; }
.menu.last { margin-right: -5px; }
.sep { width: 1px; height: 62px; background: #555; }
.ml6 { margin-left: 6px; }
.ml-3 { margin-left: -3px; }
.ml-5 { margin-left: -5px; }
.ml-7 { margin-left: -7px; }
.ml-17 { margin-left: -17px; }
.tbsel { width: 50px; height: 68px; background: #1e1e1e; border: 3px solid #46505a; border-bottom-color: #2d6f9e; border-radius: 5px; display: flex; align-items: center; justify-content: center; }
.tbsel.wide { width: 51px; }

.main { flex: 1; display: flex; min-height: 0; }
.library { width: 865px; background: #2d2d2d; padding: 0 7px 7px 6px; border-right: 1px solid #111; display: flex; flex-direction: column; }
.libhead { height: 60px; display: flex; align-items: center; justify-content: space-between; color: #fff; font-size: 27.5px; padding: 4px 20px 0 1px; letter-spacing: -.3px; }
.libsearch { height: 46px; border: 2px solid #cfcfcf; background: #1c1c1c; display: flex; align-items: center; padding-left: 24px; }
.ph { margin: 2px 0 0 24px; color: #777; font-size: 28.5px; letter-spacing: -.3px; }
.drop { margin-left: auto; margin-right: 7px; }
.libtree { flex: 1; margin-top: 19px; border: 1px solid #6e6e6e; background: #1e1e1e; padding-top: 1px; color: #fff; font-size: 28.7px; letter-spacing: -.3px; }
.node { height: 44px; display: flex; align-items: center; padding-left: 14px; gap: 7px; }
.expander { width: 22px; height: 22px; background: linear-gradient(#fff, #ccc); color: #3a5fa8; font-size: 20px; font-weight: 700; line-height: 20px; text-align: center; margin-right: 6px; letter-spacing: 0; }
.node.sub { padding-left: 93px; gap: 5px; }
.vmic { position: relative; width: 36px; height: 36px; display: block; }
.vmic.small { width: 32px; height: 32px; }
.pausebars { position: absolute; right: 0; bottom: 0; width: 16px; height: 24px; background: linear-gradient(90deg, #f26a13 42%, transparent 42%, transparent 58%, #f26a13 58%); }
.playmark { position: absolute; right: -2px; bottom: 0; }
.picked { background: #f0f0f0; color: #000; width: 58px; height: 44px; line-height: 44px; text-align: center; }

.vmarea { flex: 1; background: #000; display: flex; flex-direction: column; position: relative; min-width: 0; }
.tabs { height: 150px; flex: none; padding: 12px 0 0 5px; display: flex; gap: 16px; align-items: flex-start; }
.tab { height: 71px; display: flex; align-items: center; color: #999; font-size: 26px; border-left: 1px solid #333; border-top: 1px solid #333; border-radius: 6px 6px 0 0; }
.tab.home { width: 205px; padding-left: 15px; gap: 13px; }
.tab.active { width: 188px; padding-left: 17px; gap: 15px; background: #1c1c1c; border: 1px solid #4a4a4a; margin-left: -6px; }
.tabname { color: #fff; font-weight: 700; font-size: 27px; }
.tabx { margin-left: auto; margin-right: 20px; }

.guest { height: 1863px; flex: none; position: relative; display: flex; flex-direction: column; }
.vmgap { flex: 1; border-bottom: 2px solid #555; }
.gtop { height: 56px; flex: none; background: linear-gradient(#5c5950, #3e3c37); display: flex; align-items: center; padding-left: 14px; color: #dfdbd2; }
.gtitle { font-size: 32px; font-weight: 700; text-shadow: 0 1px 2px #000; }
.gtray { margin-left: auto; display: flex; align-items: center; padding-right: 20px; }
.en { width: 45px; height: 45px; margin-left: 33px; background: #dcd8d1; color: #3c3b37; font-size: 29px; line-height: 45px; text-align: center; border-radius: 2px; letter-spacing: -.5px; }
.gbt { margin-left: 41px; }
.gvol { margin-left: 32px; }
.gclock { font-size: 32.5px; letter-spacing: -.6px; margin: 0 29px 0 30px; }
.gbody { flex: 1; display: flex; min-height: 0; }
.launcher { width: 151px; flex: none; background: #3f0808; border-right: 2px solid #b8665a; padding: 16px 0 14px 14px; display: flex; flex-direction: column; gap: 18px; }
.tile { width: 120px; height: 120px; flex: none; position: relative; }
.tile.tall { height: 122px; margin-top: -1px; margin-bottom: -2px; }
.trash { margin-top: auto; height: 122px; }
.pip { position: absolute; }
.pip.white, .pip.blue { left: -14px; top: 50px; width: 0; height: 0; border-top: 10px solid transparent; border-bottom: 10px solid transparent; border-left: 11px solid #eee; }
.pip.blue { border-left-color: #5ab9e8; }
.pip.double { left: -14px; top: 55px; width: 11px; height: 12px; border-top: 4px solid #eee; border-bottom: 4px solid #eee; }
.pip.right { left: 124px; top: 51px; width: 0; height: 0; border-top: 10px solid transparent; border-bottom: 10px solid transparent; border-right: 11px solid #e6e0dc; }

/* Wireshark */
.shark { flex: 1; display: flex; flex-direction: column; min-width: 0; background: #fff; color: #1e1e1e; }
.wsmenu { height: 41px; flex: none; background: linear-gradient(#8c8a85, #e6e3de 7px, #eeebe6 12px); border-bottom: 2px solid #dcdad5; display: flex; align-items: center; padding: 1px 0 0 15px; font-size: 29.5px; gap: 23px; font-family: "Noto Sans", sans-serif; }
.wsmenu u { text-underline-offset: 3px; text-decoration-thickness: 2px; }
.wstools { height: 61px; flex: none; background: linear-gradient(#f7f5f1, #f0eee9); border-bottom: 2px solid #cfcdc8; display: flex; align-items: center; padding-left: 5px; }
.wt { width: 51.3px; height: 48px; display: flex; align-items: center; justify-content: center; flex: none; position: relative; }
.wt.sel { width: 48px; margin: 0 1.6px; background: #d4d2cd; border: 1px solid #c5c3be; border-radius: 4px; }
.wsep { width: 1px; height: 40px; background: #d8d6d1; margin: 0 7px; }
.ovl { position: absolute; left: 11px; top: 9px; }
.lensmark { left: 19px; top: 8px; }
.wsfilter { height: 58px; flex: none; background: #eeebe6; border-bottom: 3px solid #c9c7c2; display: flex; align-items: center; padding-left: 8px; }
.finput { width: 2543px; height: 39px; background: linear-gradient(#fff, #fbfbfa); border: 2px solid #8b8984; border-radius: 4px; display: flex; align-items: center; }
.bookmark { width: 28px; height: 100%; border-right: 2px solid #8b8984; display: flex; align-items: center; justify-content: center; }
.bookmark svg { height: 28px; }
.fph { margin-left: 6px; color: #808080; font-size: 30.5px; font-family: "Noto Sans", sans-serif; }
.fgo { margin-left: auto; }
.fdd { margin: 0 7px 0 10px; }
.fexpr { margin-left: 19px; font-size: 29.5px; font-family: "Noto Sans", sans-serif; width: 202px; white-space: nowrap; }
.fsep { width: 1px; height: 42px; background: #d0cec9; }
.fplus { margin-left: 16px; font-size: 28px; font-weight: 700; line-height: 30px; }

.plist { height: 895px; flex: none; display: flex; }
.plmain { flex: 1; display: flex; flex-direction: column; min-width: 0; }
.plhead { height: 41px; flex: none; display: flex; background: linear-gradient(#f8f6f3, #efece7); border-bottom: 2px solid #a8a6a1; font-size: 29.5px; font-family: "Noto Sans", sans-serif; line-height: 38px; white-space: nowrap; }
.h { padding-left: 5px; border-right: 1px solid #cfcdc8; flex: none; }
.h.no { width: 103px; }
.h.tm { width: 152px; }
.h.sr { width: 276px; }
.h.ds { width: 276px; }
.h.pr { width: 340px; }
.h.ln { flex: 1; border-right: 0; }
.plbody { flex: 1; position: relative; overflow: hidden; font: 27.9px/32.57px "Liberation Mono", monospace; color: #12272e; }
.row { height: 32.57px; flex: none; display: flex; white-space: nowrap; }
.row .no { width: 99px; text-align: right; }
.row .tm { width: 156px; padding-left: 10px; }
.row .sr { padding-left: 6px; }
.row .info { margin-left: auto; padding-right: 20px; }
.pk { background: #fbdfff; }
.bg { background: #f9efdb; }
.yl { background: #fef2d6; }
.bl { background: #d8ebfb; }
.picked-row { background: #2f8bc6; color: #e8f2fa; }
.bracket { position: absolute; left: 20px; top: 375px; }
.plscroll { width: 23px; flex: none; background: #e6e3de; border-left: 1px solid #c9c7c2; padding-top: 12px; display: flex; flex-direction: column; align-items: center; }
.thumb { width: 21px; height: 104px; margin-top: 12px; background: #f6f4f1; border: 1px solid #d2d0cb; }

.pdetail { flex: 1; padding-top: 2px; border-top: 6px solid #e4e1dc; font: 27.9px/33px "Liberation Mono", monospace; color: #1e1e1e; overflow: hidden; }
.dline { height: 33px; display: flex; padding-left: 12px; white-space: nowrap; }
.dline span { flex: 1; padding-left: 10px; background: #eeebe6; margin-left: 10px; }
.tri { width: 0; height: 0; flex: none; align-self: center; border-top: 6px solid transparent; border-bottom: 6px solid transparent; border-left: 7px solid #333; }
.tri.open { border-left: 6px solid transparent; border-right: 6px solid transparent; border-top: 8px solid #333; border-bottom: 0; margin-left: -2px; margin-right: -3px; }

.wsstatus { height: 51px; flex: none; background: linear-gradient(#e6e2dd, #eeebe6); border-top: 2px solid #c9c7c2; display: flex; align-items: center; padding-left: 16px; font-size: 30.5px; font-family: "Noto Sans", sans-serif; white-space: nowrap; }
.wsstatus svg + svg { margin-left: 18px; }
.capture { margin-left: 37px; }
.stats { position: absolute; left: 1971px; }
.statsep { position: absolute; left: 2727px; height: 34px; width: 0; border-left: 2px dotted #cfcdc8; }
.profile { position: absolute; left: 2756px; font-size: 29px; }

/* Packet dialog */
.dialog { position: absolute; left: 448px; top: 238px; width: 2257px; height: 1510px; background: #eeebe6; box-shadow: 0 14px 46px rgba(0,0,0,.62); border-radius: 8px 8px 0 0; display: flex; flex-direction: column; }
.dtitle { height: 65px; flex: none; background: linear-gradient(#5a574e, #3e3c37); border-radius: 8px 8px 0 0; display: flex; align-items: center; padding-left: 18px; gap: 9px; }
.wbtn { width: 36px; height: 36px; border-radius: 50%; background: linear-gradient(#7a7870, #55534c); display: flex; align-items: center; justify-content: center; box-shadow: 0 1px 2px #222; }
.wbtn.closeb { background: linear-gradient(#f08a54, #df4e1c); }
.dtext { margin-left: 20px; font-size: 30px; font-weight: 700; letter-spacing: -.8px; color: #e4e1d8; text-shadow: 0 1px 2px #000; }
.dbody { flex: 1; padding: 26px 24px 0 27px; display: flex; flex-direction: column; }
.ptree { height: 578px; flex: none; background: #fff; border: 1px solid #c3c0bb; border-top-width: 3px; font: 27.9px/29px "Liberation Mono", monospace; color: #1e1e1e; overflow: hidden; }
.tline { height: 32.6px; display: flex; white-space: nowrap; }
.tline .tri { margin-left: 10px; }
.tline.hi span { flex: 1; background: #eeebe6; margin-left: 11px; padding-left: 6px; }
.tline.child { padding-left: 66px; }
.tline.child.sub { padding-left: 40px; }
.tline.child.sub .tri { margin-left: 0; margin-right: 19px; }
.splitter { height: 8px; flex: none; display: flex; align-items: center; justify-content: center; background: #eeebe6; }
.splitter i { width: 26px; height: 3px; margin-left: 560px; background: repeating-linear-gradient(90deg, #bbb 0 2px, transparent 2px 4px); }
.hexpane { height: 694px; flex: none; background: #fff; border: 1px solid #c3c0bb; border-top-width: 3px; display: flex; font: 27.9px/25px "Liberation Mono", monospace; color: #1e1e1e; }
.hexpane > div > div { height: 31.3px; white-space: pre; }
.gut { width: 102px; background: #eeebe6; padding-left: 16px; color: #a6a4a0; }
.gut .on { color: #55534f; }
.hexcol { margin-left: 17px; width: 869px; letter-spacing: .24px; }
.asccol { letter-spacing: .24px; }
.asccol s { text-decoration: none; color: #a6a4a0; }
.hexpane b { font-weight: 400; background: #2f8bc6; color: #dcecf8; }
.dfoot { flex: 1; display: flex; justify-content: flex-end; align-items: flex-end; gap: 14px; padding: 0 2px 25px 0; }
.dbtn { width: 123px; height: 51px; font: 28px "Noto Sans", sans-serif; color: #1e1e1e; background: linear-gradient(#fff, #f0eeea); border: 2px solid #c5c3be; border-radius: 4px; padding: 0; }
.dbtn.def { background: linear-gradient(#f4f6f8, #dce6ec); border-color: #4f8fc0; }

/* VMware status bar */
.vmstatus { height: 53px; flex: none; background: #2b2b2b; border-bottom: 3px solid #444; display: flex; align-items: center; padding-left: 2px; color: #fff; font-size: 29.5px; letter-spacing: -.3px; }
.devs { margin-left: auto; display: flex; align-items: center; gap: 9px; padding-right: 50px; }
.dev { display: block; }
.devsep { width: 2px; height: 46px; background: #ddd; margin: 0 4px 0 5px; }

/* Taskbar */
.taskbar { height: 117px; flex: none; position: relative; background: linear-gradient(90deg, #272727, #242428 30%, #23262c 50%, #25262a 70%, #212833); display: flex; align-items: center; color: #fff; }
.weather { position: absolute; left: 53px; top: 30px; display: flex; gap: 24px; }
.sun { width: 50px; height: 50px; border-radius: 50%; background: linear-gradient(135deg, #f0c02a, #f16a0a); }
.wx { display: flex; flex-direction: column; font-size: 28px; line-height: 39px; margin-top: -13px; letter-spacing: -.5px; }
.wt2 { color: #aaa; }
.tasks { position: absolute; left: 989px; top: 17px; display: flex; align-items: center; }
.search { margin-left: 35px; width: 249px; height: 80px; border-radius: 40px; background: #34383c; display: flex; align-items: center; padding-left: 56px; gap: 12px; font-size: 30px; letter-spacing: -.4px; }
.tbicons { margin-left: 33px; display: flex; gap: 50px; }
.ti { width: 60px; height: 60px; position: relative; display: block; }
.ti.dot::after { content: ""; position: absolute; left: 24px; top: 68px; width: 12px; height: 7px; border-radius: 3px; background: #9a9a9a; }
.ti.current::before { content: ""; position: absolute; left: -15px; top: -20px; width: 90px; height: 100px; border-radius: 6px; background: #353637; }
.ti.current svg { position: relative; }
.ti.current::after { content: ""; position: absolute; left: 11px; top: 70px; width: 39px; height: 7px; border-radius: 4px; background: #4cc2ff; }
.badge { position: absolute; left: 26px; top: -12px; width: 38px; height: 38px; border-radius: 50%; background: #4cc2ff; color: #111; font-size: 24px; font-weight: 400; line-height: 38px; text-align: center; }
.tray { position: absolute; left: 3006px; top: 0; height: 117px; right: 0; display: flex; align-items: center; }
.trk { margin-left: 50px; }
.trm { margin-left: 52px; }
.eng { margin-left: 52px; font-size: 28px; letter-spacing: -.4px; }
.trw { margin-left: 46px; }
.trv { margin-left: 20px; }
.trb { margin-left: 22px; }
.clock { margin-left: 41px; width: 149px; display: flex; flex-direction: column; align-items: flex-end; font-size: 29px; line-height: 41px; letter-spacing: -.6px; white-space: nowrap; margin-top: -3px; }
.notif { margin-left: 26px; width: 47px; height: 42px; border-radius: 50%; background: #4cc2ff; color: #111; font-size: 27px; line-height: 42px; text-align: center; letter-spacing: -.5px; }
```
